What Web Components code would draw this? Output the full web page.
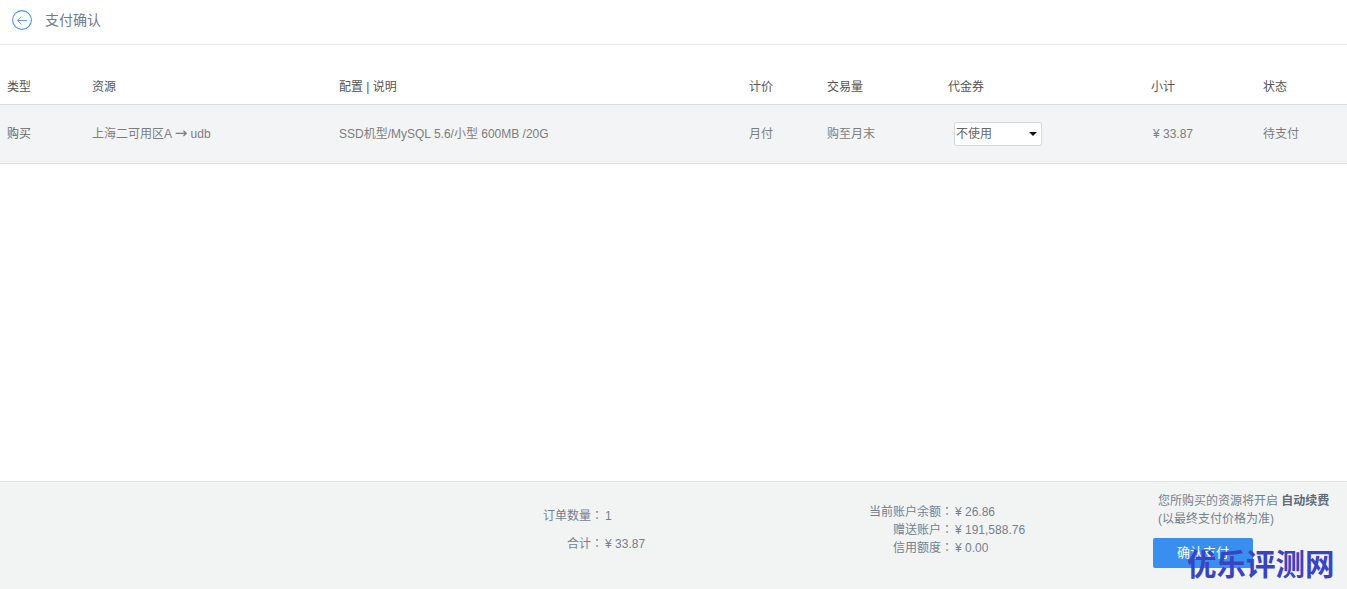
<!DOCTYPE html>
<html lang="zh">
<head>
<meta charset="utf-8">
<title>支付确认</title>
<style>
  html, body { margin: 0; height: 100%; }
  body { font: 12px/18px "Liberation Sans", "Noto Sans CJK SC", sans-serif; background: #fff; overflow: hidden; }
</style>
</head>
<body>
<pay-page></pay-page>

<script>
class PageHeader extends HTMLElement {
  constructor() {
    super();
    this.attachShadow({ mode: 'open' });
    this.shadowRoot.innerHTML = `
      <style>
        :host {
          display: flex;
          align-items: center;
          height: 40px;
          padding: 0 0 4px 12px;
          border-bottom: 1px solid #e8e9eb;
          color: #6f7c90;
          font-size: 14px;
        }
        svg { display: block; margin-right: 13px; }
      </style>
      <svg width="20" height="20" viewBox="0 0 20 20" fill="none" stroke="#4b94f7">
        <circle cx="10" cy="10" r="9.4" stroke-width="1.1"/>
        <path d="M15 10.5H5.5M9.5 6.5l-4 4 4 4" stroke-width="0.9"/>
      </svg>
      <slot></slot>
    `;
  }
}

class OrderTable extends HTMLElement {
  constructor() {
    super();
    this.attachShadow({ mode: 'open' });
    this.shadowRoot.innerHTML = `
      <style>
        :host { display: block; padding-top: 24px; }
        .row {
          display: grid;
          grid-template-columns: 85px 247px 410px 78px 121px 203px 112px 1fr;
          align-items: center;
          padding-left: 7px;
        }
        .head { height: 35px; color: #555; border-bottom: 1px solid #dcdee1; }
        .body { height: 58px; color: #7d7d7d; background: #f3f4f6; border-bottom: 1px solid #dcdee1; }
        .first { color: #666; }
        .pick { padding-left: 6px; }
        .arrow { font: 15px/0 "DejaVu Sans", sans-serif; }
        .price { padding-left: 2px; }
      </style>
      <div class="row head">
        <span>类型</span><span>资源</span><span>配置 | 说明</span><span>计价</span>
        <span>交易量</span><span>代金券</span><span>小计</span><span>状态</span>
      </div>
      <div class="row body">
        <span class="first">购买</span>
        <span>上海二可用区A <span class="arrow">→</span> udb</span>
        <span>SSD机型/MySQL 5.6/小型 600MB /20G</span>
        <span>月付</span>
        <span>购至月末</span>
        <span class="pick"><coupon-select>不使用</coupon-select></span>
        <span class="price">¥ 33.87</span>
        <span>待支付</span>
      </div>
    `;
  }
}

class CouponSelect extends HTMLElement {
  constructor() {
    super();
    this.attachShadow({ mode: 'open' });
    this.shadowRoot.innerHTML = `
      <style>
        :host {
          display: flex;
          align-items: center;
          justify-content: space-between;
          width: 88px;
          height: 24px;
          box-sizing: border-box;
          padding: 0 4px 0 1px;
          background: #fff;
          border: 1px solid #d6d8dc;
          border-radius: 2px;
          color: #666;
        }
        svg { display: block; }
      </style>
      <slot></slot>
      <svg width="8" height="4" viewBox="0 0 8 4"><path d="M0 0h8L4 4z" fill="#111"/></svg>
    `;
  }
}

class PayFooter extends HTMLElement {
  constructor() {
    super();
    this.attachShadow({ mode: 'open' });
    this.shadowRoot.innerHTML = `
      <style>
        :host {
          display: grid;
          grid-template-columns: 543px 326px 284px 1fr;
          height: 107px;
          background: #f2f4f4;
          border-top: 1px solid #dfe1e3;
          color: #75808f;
        }
        /* the colon sits centred in its cell in the reference, as in the TC font */
        i { font: normal 12px/0 "Noto Sans CJK TC", sans-serif; margin-right: 2px; }
        .count { grid-column: 2; padding-top: 25px; }
        .count div:last-child { margin: 10px 0 0 24px; }
        .balance {
          grid-column: 3;
          display: grid;
          grid-template-columns: 86px auto;
          justify-content: start;
          align-content: start;
          padding-top: 21px;
        }
        .balance span:nth-child(odd) { text-align: right; white-space: nowrap; }
        .confirm { grid-column: 4; padding-top: 10px; }
        .note { padding-left: 5px; }
        b { color: #5f6b7c; }
        button {
          display: block;
          width: 100px;
          height: 30px;
          margin-top: 10px;
          padding: 0;
          border: 0;
          border-radius: 2px;
          background: #3a8ef0;
          color: #fff;
          font: inherit;
          font-size: 13px;
        }
      </style>
      <div class="count">
        <div>订单数量<i lang="zh-TW">：</i>1</div>
        <div>合计<i lang="zh-TW">：</i>¥ 33.87</div>
      </div>
      <div class="balance">
        <span>当前账户余额<i lang="zh-TW">：</i></span><span>¥ 26.86</span>
        <span>赠送账户<i lang="zh-TW">：</i></span><span>¥ 191,588.76</span>
        <span>信用额度<i lang="zh-TW">：</i></span><span>¥ 0.00</span>
      </div>
      <div class="confirm">
        <div class="note">您所购买的资源将开启 <b>自动续费</b><br>(以最终支付价格为准)</div>
        <button type="button"><slot></slot></button>
      </div>
    `;
  }
}

class PayPage extends HTMLElement {
  constructor() {
    super();
    this.attachShadow({ mode: 'open' });
    this.shadowRoot.innerHTML = `
      <style>
        :host {
          display: flex;
          flex-direction: column;
          position: relative;
          height: 589px;
          overflow: hidden;
        }
        order-table { flex: 1; }
        .mark {
          position: absolute;
          left: 1187px;
          top: 546px;
          font: 700 29.5px/32px "Noto Sans CJK SC", sans-serif;
          color: #3944c2;
          white-space: nowrap;
        }
      </style>
      <page-header>支付确认</page-header>
      <order-table></order-table>
      <pay-footer>确认支付</pay-footer>
      <div class="mark">优乐评测网</div>
    `;
  }
}

customElements.define('page-header', PageHeader);
customElements.define('coupon-select', CouponSelect);
customElements.define('order-table', OrderTable);
customElements.define('pay-footer', PayFooter);
customElements.define('pay-page', PayPage);
</script>
</body>
</html>
